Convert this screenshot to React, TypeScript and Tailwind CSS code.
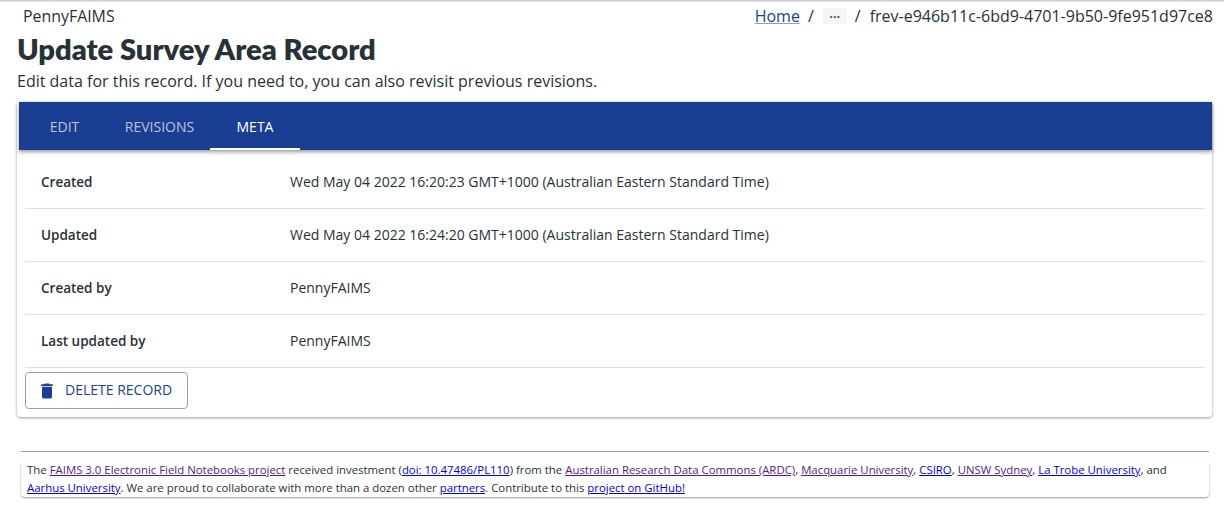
import React from 'react';

const rows = [
  { label: 'Created', value: 'Wed May 04 2022 16:20:23 GMT+1000 (Australian Eastern Standard Time)' },
  { label: 'Updated', value: 'Wed May 04 2022 16:24:20 GMT+1000 (Australian Eastern Standard Time)' },
  { label: 'Created by', value: 'PennyFAIMS' },
  { label: 'Last updated by', value: 'PennyFAIMS' },
];

const Visited = ({ children }: { children: React.ReactNode }) => (
  <a className="text-[#551a8b] underline">{children}</a>
);
const Fresh = ({ children }: { children: React.ReactNode }) => (
  <a className="text-[#0000ee] underline">{children}</a>
);

const DeleteIcon = () => (
  <svg viewBox="0 0 24 24" width={20} height={20} fill="#1a3e92" className="mr-[8px] mt-[2px] -ml-[3px]">
    <path d="M6 19c0 1.1.9 2 2 2h8c1.1 0 2-.9 2-2V7H6v12zM19 4h-3.5l-1-1h-5l-1 1H5v2h14V4z" />
  </svg>
);

export default function App() {
  return (
    <div className="h-[518px] w-[1224px] overflow-hidden bg-white font-['Open_Sans',sans-serif] text-[#263238]">
      <div className="h-[2px] w-full bg-gradient-to-b from-[#c4c4c4] to-[#eeeeee]" />

      <div className="flex h-[28px] items-center justify-between pl-[23px] pr-[11px]">
        <span className="pt-[1px] text-[15.9px]">PennyFAIMS</span>
        <div className="flex items-center text-[16px]">
          <a className="text-[#1a3e92] underline decoration-[#8c9fc9]">Home</a>
          <span className="ml-2 mr-[9px]">/</span>
          <span className="flex h-4 w-6 items-center justify-center rounded-[2px] bg-[#f5f5f5] text-[13px] font-bold leading-none text-[#555]">
            ···
          </span>
          <span className="ml-2 mr-[9px]">/</span>
          <span>frev-e946b11c-6bd9-4701-9b50-9fe951d97ce8</span>
        </div>
      </div>

      <div className="pl-[17px] pr-3">
        <h1 className="-mt-[1px] font-['Lato',sans-serif] text-[29.1px] font-extrabold leading-[40px]">
          Update Survey Area Record
        </h1>
        <p className="mt-[1px] text-[16px] leading-[22px]">
          Edit data for this record. If you need to, you can also revisit previous revisions.
        </p>

        <div className="mt-[10px] h-[315px] w-[1195px] rounded-b-[4px] bg-white shadow-[0_1px_3px_rgba(0,0,0,0.4)]">
          <div className="ml-[2px] flex h-[48px] w-[1193px] bg-[#1a3e92] pl-[15px] text-[14px] shadow-[0_2px_4px_rgba(0,0,0,0.4)]">
            <div className="flex w-[61px] items-center justify-center text-white/70">EDIT</div>
            <div className="ml-[8px] flex w-[113px] items-center justify-center text-white/70">REVISIONS</div>
            <div className="-ml-[6px] flex w-[90px] items-center justify-center border-b-2 border-white pt-[2px] text-white">
              META
            </div>
          </div>

          <div className="ml-[8px] mt-[6px] w-[1180px] text-[14px]">
            {rows.map((row) => (
              <div key={row.label} className="flex h-[53px] items-center border-b border-[#e0e0e0] pb-[2px] pl-4">
                <div className="w-[249px] pt-[2px] text-[13.5px] font-semibold">{row.label}</div>
                <div>{row.value}</div>
              </div>
            ))}
            <button className="mt-[4px] flex h-[37px] w-[163px] items-center rounded-[4px] border border-[#8c9fc9] pb-[2px] pl-[14px] text-[14px] text-[#1a3e92]">
              <DeleteIcon />
              DELETE RECORD
            </button>
          </div>
        </div>

        <div className="ml-[4px] mt-[34px] w-[1188px] border-t border-[#9e9e9e]" />
        <div className="ml-[4px] mt-[9px] h-[36px] w-[1188px] rounded-[4px] bg-white px-[6px] text-[11.4px] leading-[18px] shadow-[0_1px_2px_rgba(0,0,0,0.4)]">
          The <Visited>FAIMS 3.0 Electronic Field Notebooks project</Visited> received investment (
          <Fresh>doi: 10.47486/PL110</Fresh>) from the <Visited>Australian Research Data Commons (ARDC)</Visited>,{' '}
          <Visited>Macquarie University</Visited>, <Fresh>CSIRO</Fresh>, <Visited>UNSW Sydney</Visited>,{' '}
          <Fresh>La Trobe University</Fresh>, and <Fresh>Aarhus University</Fresh>. We are proud to collaborate with
          more than a dozen other <Fresh>partners</Fresh>. Contribute to this <Fresh>project on GitHub!</Fresh>
        </div>
      </div>
    </div>
  );
}
